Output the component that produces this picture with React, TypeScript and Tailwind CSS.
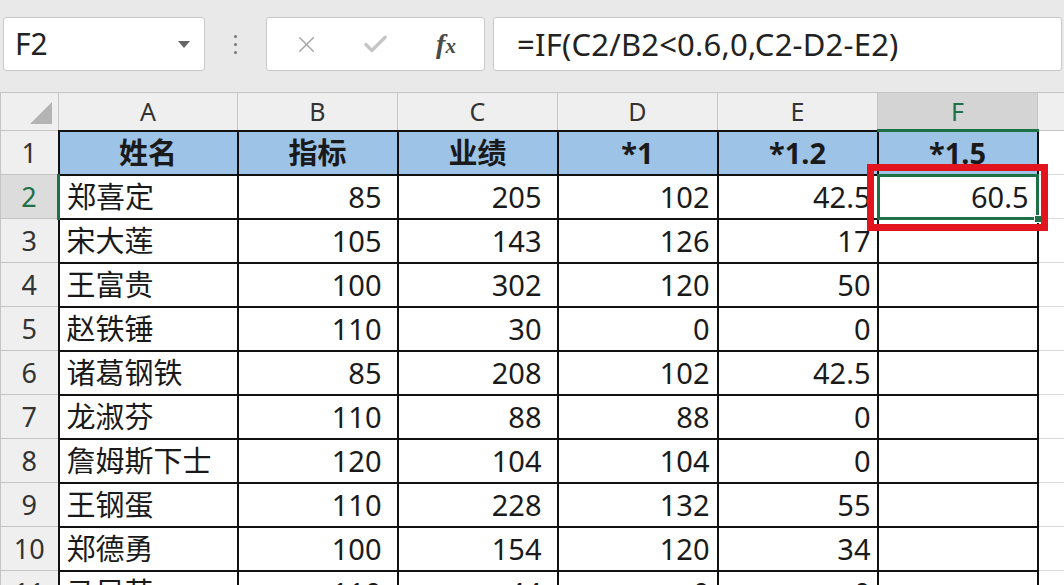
import { X, Check } from 'lucide-react';

type Row = [string, string, string, string, string, string];

const header: Row = ['姓名', '指标', '业绩', '*1', '*1.2', '*1.5'];

const rows: Row[] = [
  ['郑喜定', '85', '205', '102', '42.5', '60.5'],
  ['宋大莲', '105', '143', '126', '17', ''],
  ['王富贵', '100', '302', '120', '50', ''],
  ['赵铁锤', '110', '30', '0', '0', ''],
  ['诸葛钢铁', '85', '208', '102', '42.5', ''],
  ['龙淑芬', '110', '88', '88', '0', ''],
  ['詹姆斯下士', '120', '104', '104', '0', ''],
  ['王钢蛋', '110', '228', '132', '55', ''],
  ['郑德勇', '100', '154', '120', '34', ''],
  ['马凤英', '110', '44', '0', '0', ''],
];

// G is off-screen, so its header stays blank
const letters = ['A', 'B', 'C', 'D', 'E', 'F', ''];

// right padding differs a bit per column in the shot
const numPad = ['', 'pr-[15px]', 'pr-[15px]', 'pr-[7px]', 'pr-[6px]', 'pr-[8px]'];

function FormulaBar() {
  return (
    <div className="h-[92px] bg-[#e9e9e9] flex items-start pt-[17px] pl-[3px]">
      {/* Name box */}
      <div className="w-[202px] h-[54px] bg-white border border-[#c9c9c9] rounded-[3px] flex items-center justify-between pl-[11px] pr-[14px]">
        <span className="text-[30px] text-[#222] leading-none">F2</span>
        <svg width="12" height="7" viewBox="0 0 12 7">
          <polygon points="0,0 12,0 6,7" fill="#666" />
        </svg>
      </div>

      {/* Grip dots */}
      <div className="w-[61px] h-[54px] flex flex-col items-center justify-center gap-[5px]">
        <span className="w-[3px] h-[3px] rounded-full bg-[#777]" />
        <span className="w-[3px] h-[3px] rounded-full bg-[#777]" />
        <span className="w-[3px] h-[3px] rounded-full bg-[#777]" />
      </div>

      {/* Cancel / enter / fx */}
      <div className="w-[219px] h-[54px] bg-white border border-[#c9c9c9] rounded-[3px] flex items-center">
        <div className="w-[72px] flex justify-center pl-[6px]">
          <X size={27} strokeWidth={1.4} className="text-[#a8a8a8]" />
        </div>
        <div className="w-[72px] flex justify-center">
          <Check size={29} strokeWidth={2.8} className="text-[#c6c6c6]" />
        </div>
        <div className="w-[72px] flex justify-center pr-[2px]">
          <span className="font-['Liberation_Serif',serif] italic font-bold text-[#4a4a4a] text-[28px] leading-none">
            f<span className="text-[21px]">x</span>
          </span>
        </div>
      </div>

      {/* Formula input */}
      <div className="flex-1 ml-[8px] mr-[2px] h-[54px] bg-white border border-[#c9c9c9] rounded-[3px] flex items-center pl-[23px]">
        <span className="text-[31px] text-[#222] leading-none tracking-[0.2px]">=IF(C2/B2&lt;0.6,0,C2-D2-E2)</span>
      </div>
    </div>
  );
}

function SelectedCell({ value }: { value: string }) {
  return (
    <td className="relative border-2 border-[#111] text-right pr-[8px] bg-white">
      {value}
      {/* active cell outline */}
      <div className="absolute -inset-[2px] border-[3px] border-[#1e7145] pointer-events-none" />
      <div className="absolute -right-[5px] -bottom-[5px] w-[8px] h-[8px] bg-[#1e7145] border border-white z-10" />
      {/* red annotation frame */}
      <div className="absolute -left-[12px] -top-[12px] -right-[11px] -bottom-[13px] border-[7px] border-[#e2141d] z-20 pointer-events-none" />
    </td>
  );
}

export default function App() {
  return (
    <div className="w-[1064px] h-[585px] overflow-hidden bg-white font-['Noto_Sans','Noto_Sans_CJK_SC',sans-serif] text-[#1a1a1a]">
      <FormulaBar />
      <table className="table-fixed border-collapse w-[1197px]">
        <colgroup>
          <col className="w-[58px]" />
          <col className="w-[179px]" />
          <col className="w-[160px]" />
          <col className="w-[160px]" />
          <col className="w-[160px]" />
          <col className="w-[160px]" />
          <col className="w-[160px]" />
          <col className="w-[160px]" />
        </colgroup>
        <thead>
          <tr className="h-[38px]">
            <th className="relative bg-[#efefef] border border-[#c4c4c4] p-0">
              <svg className="absolute right-[6px] bottom-[6px]" width="22" height="22" viewBox="0 0 22 22">
                <polygon points="22,0 22,22 0,22" fill="#b4b4b4" />
              </svg>
            </th>
            {letters.map((l, i) =>
              l === 'F' ? (
                <th
                  key={i}
                  className="bg-[#d4d4d4] border border-[#c4c4c4] border-b-[3px] border-b-[#1e7145] text-[25px] font-normal text-[#1e7145] leading-none"
                >
                  {l}
                </th>
              ) : (
                <th key={i} className="bg-[#efefef] border border-[#c4c4c4] text-[25px] font-normal text-[#333] leading-none">
                  {l}
                </th>
              )
            )}
          </tr>
        </thead>
        <tbody className="text-[29px] leading-none">
          <tr className="h-[44px]">
            <td className="bg-[#efefef] border border-[#c4c4c4] text-center text-[27px] text-[#333]">1</td>
            {header.map((h) => (
              <td key={h} className="bg-[#9dc3e6] border-2 border-[#111] text-center font-bold">
                {h}
              </td>
            ))}
            <td className="border-b border-[#d9d9d9]" />
          </tr>
          {rows.map((r, i) => {
            const n = i + 2;
            const active = n === 2;
            return (
              <tr key={n} className="h-[44px]">
                <td
                  className={
                    active
                      ? 'bg-[#dcdcdc] border border-[#c4c4c4] border-r-[3px] border-r-[#1e7145] text-center text-[27px] text-[#1e7145]'
                      : 'bg-[#efefef] border border-[#c4c4c4] text-center text-[27px] text-[#333]'
                  }
                >
                  {n}
                </td>
                <td className="border-2 border-[#111] pl-[7px] text-left">{r[0]}</td>
                {r.slice(1).map((v, j) =>
                  active && j === 4 ? (
                    <SelectedCell key={j} value={v} />
                  ) : (
                    <td key={j} className={`border-2 border-[#111] text-right ${numPad[j + 1]}`}>
                      {v}
                    </td>
                  )
                )}
                <td className="border-b border-[#d9d9d9]" />
              </tr>
            );
          })}
        </tbody>
      </table>
    </div>
  );
}
